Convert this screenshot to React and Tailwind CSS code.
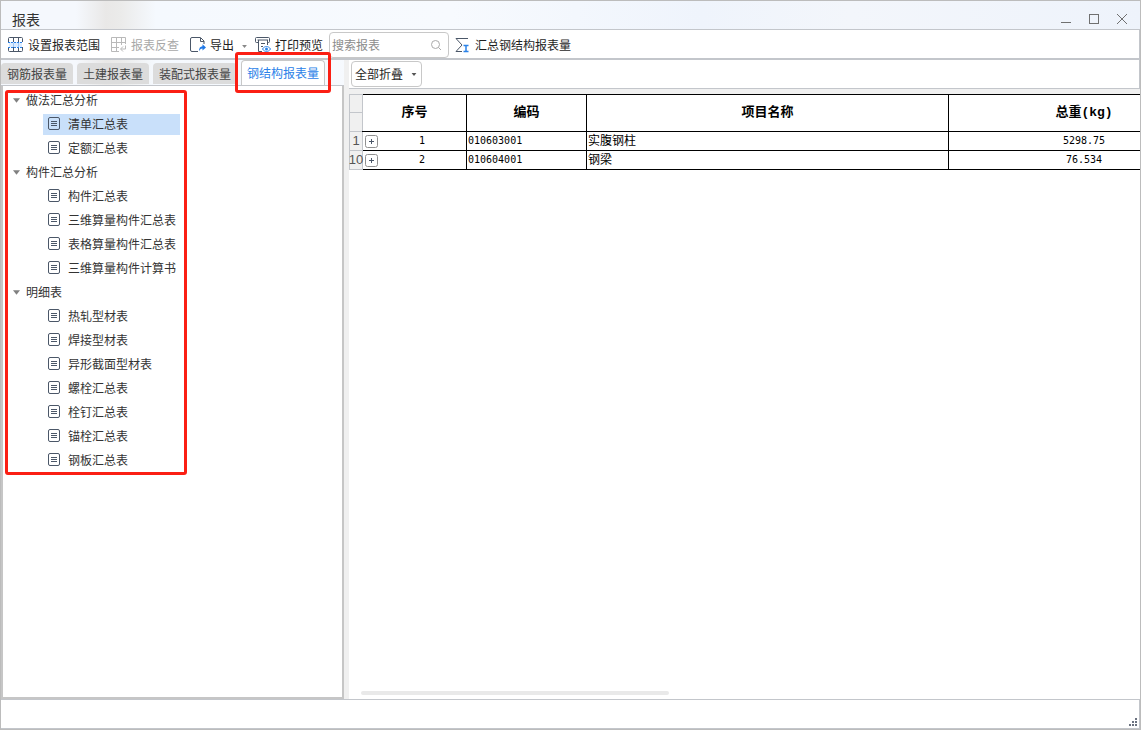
import React, { useState } from "react";

const groups = [
  { name: "做法汇总分析", items: ["清单汇总表", "定额汇总表"] },
  {
    name: "构件汇总分析",
    items: ["构件汇总表", "三维算量构件汇总表", "表格算量构件汇总表", "三维算量构件计算书"],
  },
  {
    name: "明细表",
    items: ["热轧型材表", "焊接型材表", "异形截面型材表", "螺栓汇总表", "栓钉汇总表", "锚栓汇总表", "钢板汇总表"],
  },
];

const tabs = ["钢筋报表量", "土建报表量", "装配式报表量", "钢结构报表量"];

const rows = [
  { line: 1, no: 1, code: "010603001", name: "实腹钢柱", weight: "5298.75" },
  { line: 10, no: 2, code: "010604001", name: "钢梁", weight: "76.534" },
];

const Caret = ({ className }) => (
  <svg viewBox="0 0 8 5" className={className} fill="currentColor" aria-hidden="true">
    <path d="M0 0h8L4 5z" />
  </svg>
);

const Icon = ({ children }) => (
  <svg width="16" height="16" viewBox="0 0 16 16" fill="none" className="shrink-0" aria-hidden="true">
    {children}
  </svg>
);

const RangeIcon = () => (
  <Icon>
    <path d="M1 5h13v5H1z" fill="#dcecff" />
    <path d="M5.500 6v4M10.500 6v4" stroke="#9cc6f5" />
    <path
      d="M.5 5V1.500a1 1 0 0 1 1-1h12a1 1 0 0 1 1 1V5M.5 10v3.500a1 1 0 0 0 1 1h12a1 1 0 0 0 1-1V10M5.500.5V5M10.500.5V5M5.500 10v4.500M10.500 10v4.500"
      stroke="#4b5768"
    />
    <path d="M0 5.500h15M0 10.500h15" stroke="#2b82e8" strokeDasharray="2 1" />
  </Icon>
);

const TraceIcon = () => (
  <Icon>
    <path d="M14.500 7V.5H.5v14H8M.5 5.500h14M.5 10.500H8M5.500.5v14M10.500.5V8" stroke="#b9b9b9" />
    <path d="M14.500 8.500V12H10M12 9.500L9.500 12l2.500 2.500" stroke="#b9b9b9" />
  </Icon>
);

const ExportIcon = () => (
  <Icon>
    <path d="M8 14.500H2A1.500 1.500 0 0 1 .5 13V2A1.500 1.500 0 0 1 2 .5h8.500l3.500 3.500V7" stroke="#4b5768" />
    <path d="M10.500 1v3.500H14" stroke="#4b5768" />
    <path d="M9 14.500c0-3.500 1.200-5 3.500-5.200V7.300L16 10.500l-3.500 3v-2c-1.600 0-2.800.9-3.500 3z" fill="#1f78e6" />
  </Icon>
);

const PrintIcon = () => (
  <Icon>
    <path d="M3 5.500H1.500a1 1 0 0 1-1-1v-3a1 1 0 0 1 1-1h12a1 1 0 0 1 1 1v3a1 1 0 0 1-1 1H12.500" stroke="#4b5768" />
    <path d="M2.500 3h10.500M3.500 3v11.500H7M12.500 3v5M6 6.500h4M6 9.500h2" stroke="#4b5768" />
    <path d="M7.500 12c2-3.300 6-3.300 8 0-2 3.300-6 3.300-8 0z" stroke="#2b82e8" fill="#fff" />
    <circle cx="11.500" cy="12" r="1.500" fill="#2b82e8" />
  </Icon>
);

const SumIcon = () => (
  <Icon>
    <path d="M13 1.500H1L7 8 1 14.500h6" stroke="#4b5768" />
    <path d="M8.500 8.500h5M8.500 14.500h5M11 8.500v6" stroke="#2b82e8" strokeWidth="1.500" />
  </Icon>
);

const SheetIcon = () => (
  <svg width="12" height="13" viewBox="0 0 12 13" fill="none" stroke="#4b5768" className="mb-0.5 shrink-0" aria-hidden="true">
    <rect x=".5" y=".5" width="11" height="12" rx="1.500" />
    <path d="M3 4.500h6M3 6.500h6M3 8.500h6" />
  </svg>
);

function ToolButton({ icon, label, disabled }) {
  return (
    <button
      disabled={disabled}
      className="flex items-center gap-1 whitespace-nowrap text-[#1f1f1f] disabled:text-[#a8a8a8]"
    >
      {icon}
      {label}
    </button>
  );
}

function TitleBar() {
  return (
    <header className="flex h-7 shrink-0 items-center justify-between pl-[11px] pr-3">
      <h1 className="pt-2 text-sm leading-5 text-[#333]">报表</h1>
      <div className="flex items-center gap-4 pt-2 text-[#707070]">
        <button aria-label="最小化">
          <svg width="12" height="12" viewBox="0 0 12 12" stroke="currentColor">
            <path d="M1 9.500h10" />
          </svg>
        </button>
        <button aria-label="最大化">
          <svg width="12" height="12" viewBox="0 0 12 12" stroke="currentColor" fill="none">
            <rect x="1.500" y="1.500" width="9" height="9" />
          </svg>
        </button>
        <button aria-label="关闭">
          <svg width="12" height="12" viewBox="0 0 12 12" stroke="currentColor">
            <path d="M1 1l10 10M11 1L1 11" />
          </svg>
        </button>
      </div>
    </header>
  );
}

function Toolbar() {
  return (
    <div className="flex h-[31px] shrink-0 items-center border-t border-b-2 border-r border-[#c3c6cb] bg-white pt-0.5 pl-[7px]">
      <div className="flex items-center gap-[11px]">
        <ToolButton icon={<RangeIcon />} label="设置报表范围" />
        <ToolButton icon={<TraceIcon />} label="报表反查" disabled />
        <ToolButton icon={<ExportIcon />} label="导出" />
      </div>
      <button aria-label="导出选项" className="px-2 pt-0.5 text-[#888]">
        <Caret className="h-[3px] w-[5px]" />
      </button>
      <div className="flex items-center gap-1.5">
        <ToolButton icon={<PrintIcon />} label="打印预览" />
        <label className="flex h-[26px] w-[120px] items-center rounded border border-[#c8c8c8] bg-white pr-1.5">
          <input
            type="text"
            aria-label="搜索报表"
            placeholder="搜索报表"
            className="w-full min-w-0 pl-0.5 outline-none placeholder:text-[#8c8c8c]"
          />
          <svg width="12" height="12" viewBox="0 0 12 12" fill="none" stroke="#aaa" className="shrink-0" aria-hidden="true">
            <circle cx="5.500" cy="5.500" r="4" />
            <path d="M8.500 8.500l2.500 2.500" />
          </svg>
        </label>
        <ToolButton icon={<SumIcon />} label="汇总钢结构报表量" />
      </div>
    </div>
  );
}

function ReportTree() {
  const [selected, setSelected] = useState("清单汇总表");

  return (
    <div className="flex-1 border-r-2 border-b-2 border-l-2 border-[#c6c6c6] bg-white pt-0.5">
      <div className="relative ml-0.5 w-[182px]">
        <ul>
          {groups.map((group) => (
            <li key={group.name}>
              <button className="flex h-6 items-center gap-1.5 pl-2 text-[#333]">
                <Caret className="h-[5px] w-[7px] text-[#808080]" />
                {group.name}
              </button>
              <ul>
                {group.items.map((item) => (
                  <li key={item} className="flex h-6 items-center pl-[38px]">
                    <button
                      onClick={() => setSelected(item)}
                      className={
                        selected === item
                          ? "flex h-[21px] w-[137px] items-center gap-2 whitespace-nowrap bg-[#c9e0fa] pl-[5px] text-[#333]"
                          : "flex h-[21px] w-[137px] items-center gap-2 whitespace-nowrap pl-[5px] text-[#333]"
                      }
                    >
                      <SheetIcon />
                      {item}
                    </button>
                  </li>
                ))}
              </ul>
            </li>
          ))}
        </ul>
        {/* highlight frame */}
        <div className="pointer-events-none absolute inset-x-0 top-0.5 -bottom-[3px] rounded-[3px] border-3 border-[#fb1f14]" />
      </div>
    </div>
  );
}

function Sidebar() {
  const [active, setActive] = useState("钢结构报表量");

  return (
    <aside className="flex w-[343px] shrink-0 flex-col">
      <nav className="flex h-[26px] items-end gap-1 border-b border-[#c3c6cb]">
        {tabs.map((tab) =>
          tab === active ? (
            <div key={tab} className="relative h-[25px]">
              <button className="h-full whitespace-nowrap rounded-t border border-b-0 border-[#c8c8c8] bg-white px-[5px] text-[#2b82e8]">
                {tab}
              </button>
              <div className="pointer-events-none absolute -inset-x-1.5 -top-2 -bottom-2 z-10 rounded-[3px] border-3 border-[#fb1f14]" />
            </div>
          ) : (
            <button
              key={tab}
              onClick={() => setActive(tab)}
              className="mb-px h-[21px] whitespace-nowrap rounded-t bg-[#dcdcdc] px-1.5 text-[#444]"
            >
              {tab}
            </button>
          )
        )}
      </nav>
      <ReportTree />
    </aside>
  );
}

function ReportTable() {
  return (
    <div className="overflow-hidden">
      <table className="w-[870px] table-fixed border-collapse font-['DejaVu_Sans_Mono','Noto_Sans_CJK_SC',monospace] text-black">
        <colgroup>
          <col className="w-[13px]" />
          <col className="w-[104px]" />
          <col className="w-[120px]" />
          <col className="w-[362px]" />
          <col className="w-[271px]" />
        </colgroup>
        <thead className="font-['Liberation_Mono','Noto_Sans_CJK_SC',monospace] text-[13px]">
          <tr className="h-[18px]">
            <td className="border border-[#c3c6cb] bg-[#f0f0f0]" />
            {["序号", "编码", "项目名称", "总重(kg)"].map((title) => (
              <th key={title} rowSpan={2} className="border border-black p-0 font-bold first-of-type:border-l-0">
                {title}
              </th>
            ))}
          </tr>
          <tr className="h-[19px]">
            <td className="border border-[#c3c6cb] bg-[#f0f0f0]" />
          </tr>
        </thead>
        <tbody>
          {rows.map((row) => (
            <tr key={row.line} className="h-[19px] text-[10px] leading-[18px]">
              <th className="border border-[#c3c6cb] bg-[#f0f0f0] p-0 font-['Liberation_Sans',sans-serif] text-[13px] leading-[18px] font-normal text-[#555]">
                <div className="flex justify-center">{row.line}</div>
              </th>
              <td className="border border-l-0 border-black p-0">
                <div className="flex items-center pl-0.5">
                  <button aria-label="展开">
                    <svg width="13" height="13" viewBox="0 0 13 13" fill="none" className="block">
                      <rect x=".5" y=".5" width="12" height="12" rx="2" stroke="#909090" />
                      <path d="M4 6.500h5M6.500 4v5" stroke="#4b5768" />
                    </svg>
                  </button>
                  <span className="flex-1 text-center">{row.no}</span>
                </div>
              </td>
              <td className="border border-black p-0 pl-px">{row.code}</td>
              <td className="border border-black p-0 pl-px text-xs leading-[18px]">{row.name}</td>
              <td className="border border-black p-0 text-center">{row.weight}</td>
            </tr>
          ))}
        </tbody>
      </table>
    </div>
  );
}

export default function App() {
  return (
    <div className="flex h-screen w-full flex-col overflow-hidden border border-[#bcbcbc] bg-[#f5f8fc] bg-[linear-gradient(90deg,#f5f8fd_0px,#f5f8fd_75px,#e9e8e7_105px,#ebebea_120px,#f5f9fe_155px,#f7fafe_450px,#eff4fc_700px,#f3f6fb_850px,#eef3fb_1141px)] font-['Noto_Sans_CJK_SC',sans-serif] text-xs">
      <TitleBar />
      <Toolbar />
      <main className="flex min-h-0 flex-1">
        <Sidebar />
        <section className="flex min-w-0 flex-1 flex-col border-l-5 border-[#f0f0f0] bg-white">
          <div className="flex h-[29px] shrink-0 items-center border-r border-b border-[#c3c6cb] pl-0.5">
            <div className="relative">
              <select
                aria-label="折叠方式"
                className="h-[26px] w-[71px] appearance-none rounded border border-[#c8c8c8] bg-white pl-[3px] text-[#1f1f1f]"
              >
                <option>全部折叠</option>
                <option>全部展开</option>
              </select>
              <Caret className="pointer-events-none absolute top-3 right-[5px] h-[3px] w-[6px] text-[#555]" />
            </div>
          </div>
          <div className="border-t-5 border-[#f0f0f0]">
            <ReportTable />
          </div>
          <div className="mt-auto mb-1 ml-3 h-1 w-[39%] shrink-0 rounded-full bg-[#e9e9e9]" />
        </section>
      </main>
      <footer className="flex h-[30px] shrink-0 items-end justify-end border-t border-r border-b border-[#c3c6cb] bg-white">
        <svg width="10" height="10" viewBox="0 0 10 10" fill="#6b7280" className="mr-px mb-px" aria-hidden="true">
          <path d="M7 1h2v2H7zM7 4h2v2H7zM4 4h2v2H4zM7 7h2v2H7zM4 7h2v2H4zM1 7h2v2H1z" />
        </svg>
      </footer>
    </div>
  );
}
